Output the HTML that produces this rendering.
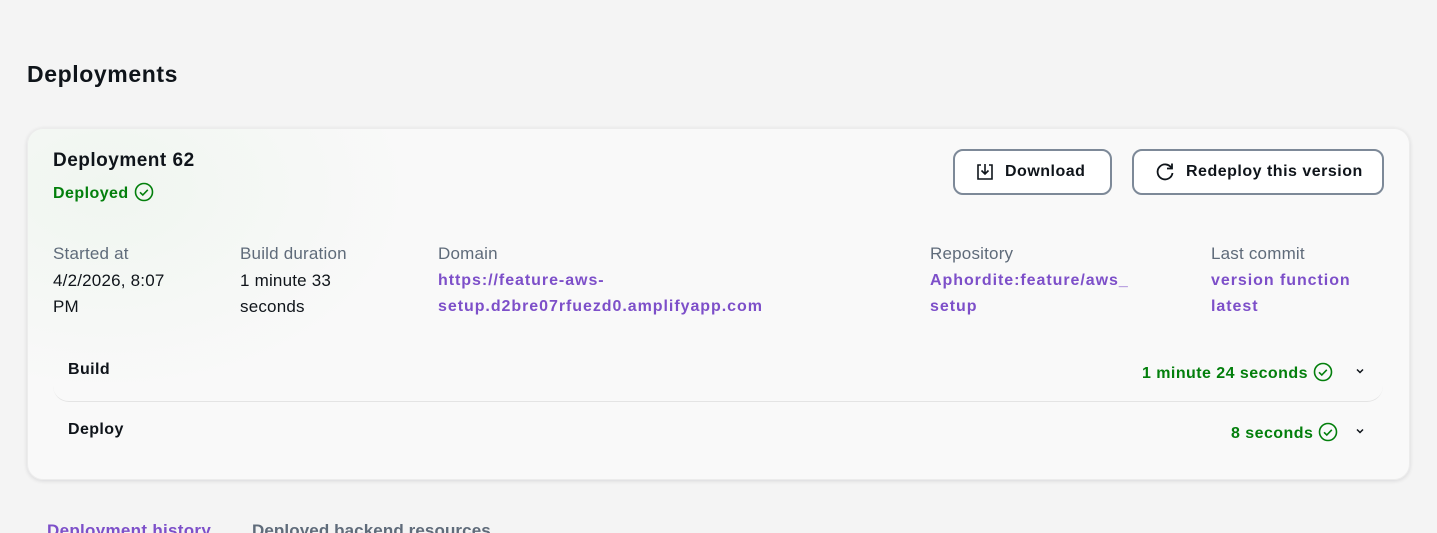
<!DOCTYPE html>
<html><head><style>
*{margin:0;padding:0;box-sizing:border-box}
html,body{width:1437px;height:533px;overflow:hidden}
body{background:#f4f4f4;font-family:"Liberation Sans",sans-serif;color:#0f141a;position:relative}
.abs{position:absolute;white-space:nowrap}
h1{position:absolute;left:27px;top:61px;font-size:23px;font-weight:bold;letter-spacing:0.6px}
.card{position:absolute;left:27px;top:128px;width:1383px;height:352px;border-radius:16px;background:radial-gradient(ellipse 300px 200px at 80px 60px,#f0f6f0 0%,#f9f9f9 100%);box-shadow:0 1px 4px rgba(0,7,22,.12);border:1px solid #ececec}
.lbl{color:#5f6b7a;font-size:17px;letter-spacing:0.2px}
.val{font-size:17px;line-height:26px;letter-spacing:0.2px}
.link{color:#7d4fc9;font-weight:bold;font-size:16px;line-height:26px;letter-spacing:0.95px}
.btn{position:absolute;top:149px;height:46px;border:2px solid #7d8998;border-radius:10px;background:#fff;font-weight:bold;font-size:16px;display:flex;align-items:center;gap:10px;padding-left:20px;letter-spacing:0.5px}
.green{color:#037f0c;font-weight:bold;font-size:16px;letter-spacing:0.45px}
.row{font-weight:bold;font-size:16px;letter-spacing:0.4px}
</style></head><body>
<h1>Deployments</h1>
<div class="card"></div>
<div class="abs" style="left:53px;top:150px;font-size:19px;font-weight:bold;letter-spacing:0.5px">Deployment 62</div>
<div class="abs green" style="left:53px;top:182px">Deployed <svg width="20" height="20" viewBox="0 0 20 20" style="vertical-align:-4px"><circle cx="10" cy="10" r="8.5" fill="none" stroke="#037f0c" stroke-width="1.6"/><path d="M6 10.3l2.8 2.7 5-5.2" fill="none" stroke="#037f0c" stroke-width="1.6"/></svg></div>
<div class="btn" style="left:953px;width:159px"><svg width="20" height="20" viewBox="0 0 20 20"><path d="M6 3H3v14h14V3h-3" fill="none" stroke="#0f141a" stroke-width="1.6"/><path d="M10 2v10M6.5 8.5L10 12l3.5-3.5" fill="none" stroke="#0f141a" stroke-width="1.6"/></svg>Download</div>
<div class="btn" style="left:1132px;width:252px"><svg width="22" height="22" viewBox="0 0 22 22"><path d="M17.5 7A7.5 7.5 0 1 0 18.5 12" fill="none" stroke="#0f141a" stroke-width="1.8"/><path d="M18 2.5V7.5H13" fill="none" stroke="#0f141a" stroke-width="1.8"/></svg>Redeploy this version</div>
<div class="abs lbl" style="left:53px;top:244px">Started at</div>
<div class="abs val" style="left:53px;top:268px">4/2/2026, 8:07<br>PM</div>
<div class="abs lbl" style="left:240px;top:244px">Build duration</div>
<div class="abs val" style="left:240px;top:268px">1 minute 33<br>seconds</div>
<div class="abs lbl" style="left:438px;top:244px">Domain</div>
<div class="abs link" style="left:438px;top:268px">https://feature-aws-<br>setup.d2bre07rfuezd0.amplifyapp.com</div>
<div class="abs lbl" style="left:930px;top:244px">Repository</div>
<div class="abs link" style="left:930px;top:268px">Aphordite:feature/aws_<br>setup</div>
<div class="abs lbl" style="left:1211px;top:244px">Last commit</div>
<div class="abs link" style="left:1211px;top:268px">version function<br>latest</div>
<div class="abs" style="left:53px;top:341px;width:1330px;height:61px;border-bottom:1px solid #e4e4e4;border-radius:0 0 16px 16px"></div>
<div class="abs row" style="left:68px;top:361px">Build</div>
<div class="abs green" style="left:1142px;top:362px">1 minute 24 seconds <svg width="20" height="20" viewBox="0 0 20 20" style="vertical-align:-4px"><circle cx="10" cy="10" r="8.5" fill="none" stroke="#037f0c" stroke-width="1.6"/><path d="M6 10.3l2.8 2.7 5-5.2" fill="none" stroke="#037f0c" stroke-width="1.6"/></svg></div>
<svg class="abs" style="left:1355px;top:366px" width="10" height="10" viewBox="0 0 10 10"><path d="M2 3.5l3 3 3-3" fill="none" stroke="#0f141a" stroke-width="1.5"/></svg>
<div class="abs row" style="left:68px;top:421px">Deploy</div>
<div class="abs green" style="left:1231px;top:422px">8 seconds <svg width="20" height="20" viewBox="0 0 20 20" style="vertical-align:-4px"><circle cx="10" cy="10" r="8.5" fill="none" stroke="#037f0c" stroke-width="1.6"/><path d="M6 10.3l2.8 2.7 5-5.2" fill="none" stroke="#037f0c" stroke-width="1.6"/></svg></div>
<svg class="abs" style="left:1355px;top:426px" width="10" height="10" viewBox="0 0 10 10"><path d="M2 3.5l3 3 3-3" fill="none" stroke="#0f141a" stroke-width="1.5"/></svg>
<div class="abs" style="left:47px;top:521px;font-size:17px;font-weight:bold;color:#7d4fc9;letter-spacing:0.3px">Deployment history</div>
<div class="abs" style="left:252px;top:521px;font-size:17px;font-weight:bold;color:#5f6b7a;letter-spacing:0.1px">Deployed backend resources</div>
</body></html>
